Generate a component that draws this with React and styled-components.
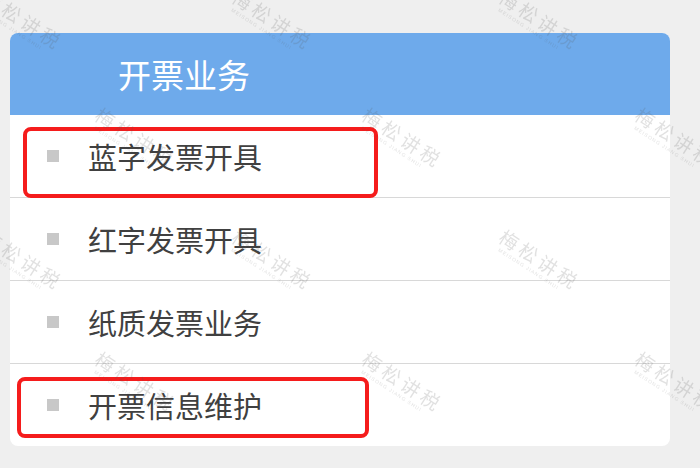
import styled, { createGlobalStyle, css } from "styled-components";

const GlobalStyle = createGlobalStyle`
  html, body {
    margin: 0;
    padding: 0;
    background: #efefef;
  }
  body {
    font-family: "Noto Sans CJK SC", "Noto Sans", sans-serif;
  }
`;

const Page = styled.div`
  width: 700px;
  height: 468px;
  padding: 33px 30px 0 10px;
  box-sizing: border-box;
  overflow: hidden;
`;

const Card = styled.div`
  background: #ffffff;
  border-radius: 8px;
  overflow: hidden;
`;

const Header = styled.div`
  height: 82px;
  display: flex;
  align-items: center;
  padding-left: 108px;
  background: #6eaaeb;
  color: #ffffff;
  font-size: 33px;
  line-height: 1;
`;

const List = styled.ul`
  list-style: none;
  margin: 0;
  padding: 0;
`;

const marks = {
  top: css`
    left: 13px;
    top: 12px;
    width: 355px;
    height: 71px;
  `,
  bottom: css`
    left: 7px;
    top: 13px;
    width: 352px;
    height: 61px;
  `,
};

const Row = styled.li`
  position: relative;
  height: 82px;
  display: flex;
  align-items: center;
  gap: 29px;
  padding-left: 37px;
  border-bottom: 1px solid #d8d8d8;
  color: #404040;
  font-size: 29px;
  line-height: 1;

  &:last-child {
    border-bottom: none;
  }

  ${({ $mark }) =>
    $mark &&
    css`
      &::after {
        content: "";
        position: absolute;
        box-sizing: border-box;
        border: 4px solid #f51c1c;
        border-radius: 8px;
        ${marks[$mark]}
      }
    `}
`;

const Bullet = styled.span`
  width: 12px;
  height: 12px;
  background: #c8c8c8;
  flex-shrink: 0;
`;

const Watermarks = styled.div`
  position: fixed;
  inset: 0;
  pointer-events: none;
  overflow: hidden;
`;

const Mark = styled.div`
  position: absolute;
  transform: rotate(33deg);
  transform-origin: left top;
  color: rgba(90, 90, 90, 0.18);
  white-space: nowrap;
`;

const MarkTitle = styled.div`
  font-size: 19px;
  letter-spacing: 4px;
  line-height: 1;
`;

const MarkSub = styled.div`
  margin-top: 2px;
  font-family: "Liberation Sans", sans-serif;
  font-size: 5px;
  letter-spacing: 1px;
  padding-left: 6px;
`;

const items = [
  { text: "蓝字发票开具", mark: "top" },
  { text: "红字发票开具" },
  { text: "纸质发票业务" },
  { text: "开票信息维护", mark: "bottom" },
];

const rows = [-14, 104, 226, 348, 470];
const spots = rows.flatMap((y, i) =>
  (i % 2 ? [103, 370, 643] : [-10, 240, 507]).map((x) => ({ x, y }))
);

const App = () => {
  return (
    <>
      <GlobalStyle />
      <Page>
        <Card>
          <Header>开票业务</Header>
          <List>
            {items.map((item) => (
              <Row key={item.text} $mark={item.mark}>
                <Bullet />
                {item.text}
              </Row>
            ))}
          </List>
        </Card>
      </Page>
      <Watermarks>
        {spots.map((s, i) => (
          <Mark key={i} style={{ left: s.x, top: s.y }}>
            <MarkTitle>梅松讲税</MarkTitle>
            <MarkSub>MEISONG JIANG SHUI</MarkSub>
          </Mark>
        ))}
      </Watermarks>
    </>
  );
};

export default App;
